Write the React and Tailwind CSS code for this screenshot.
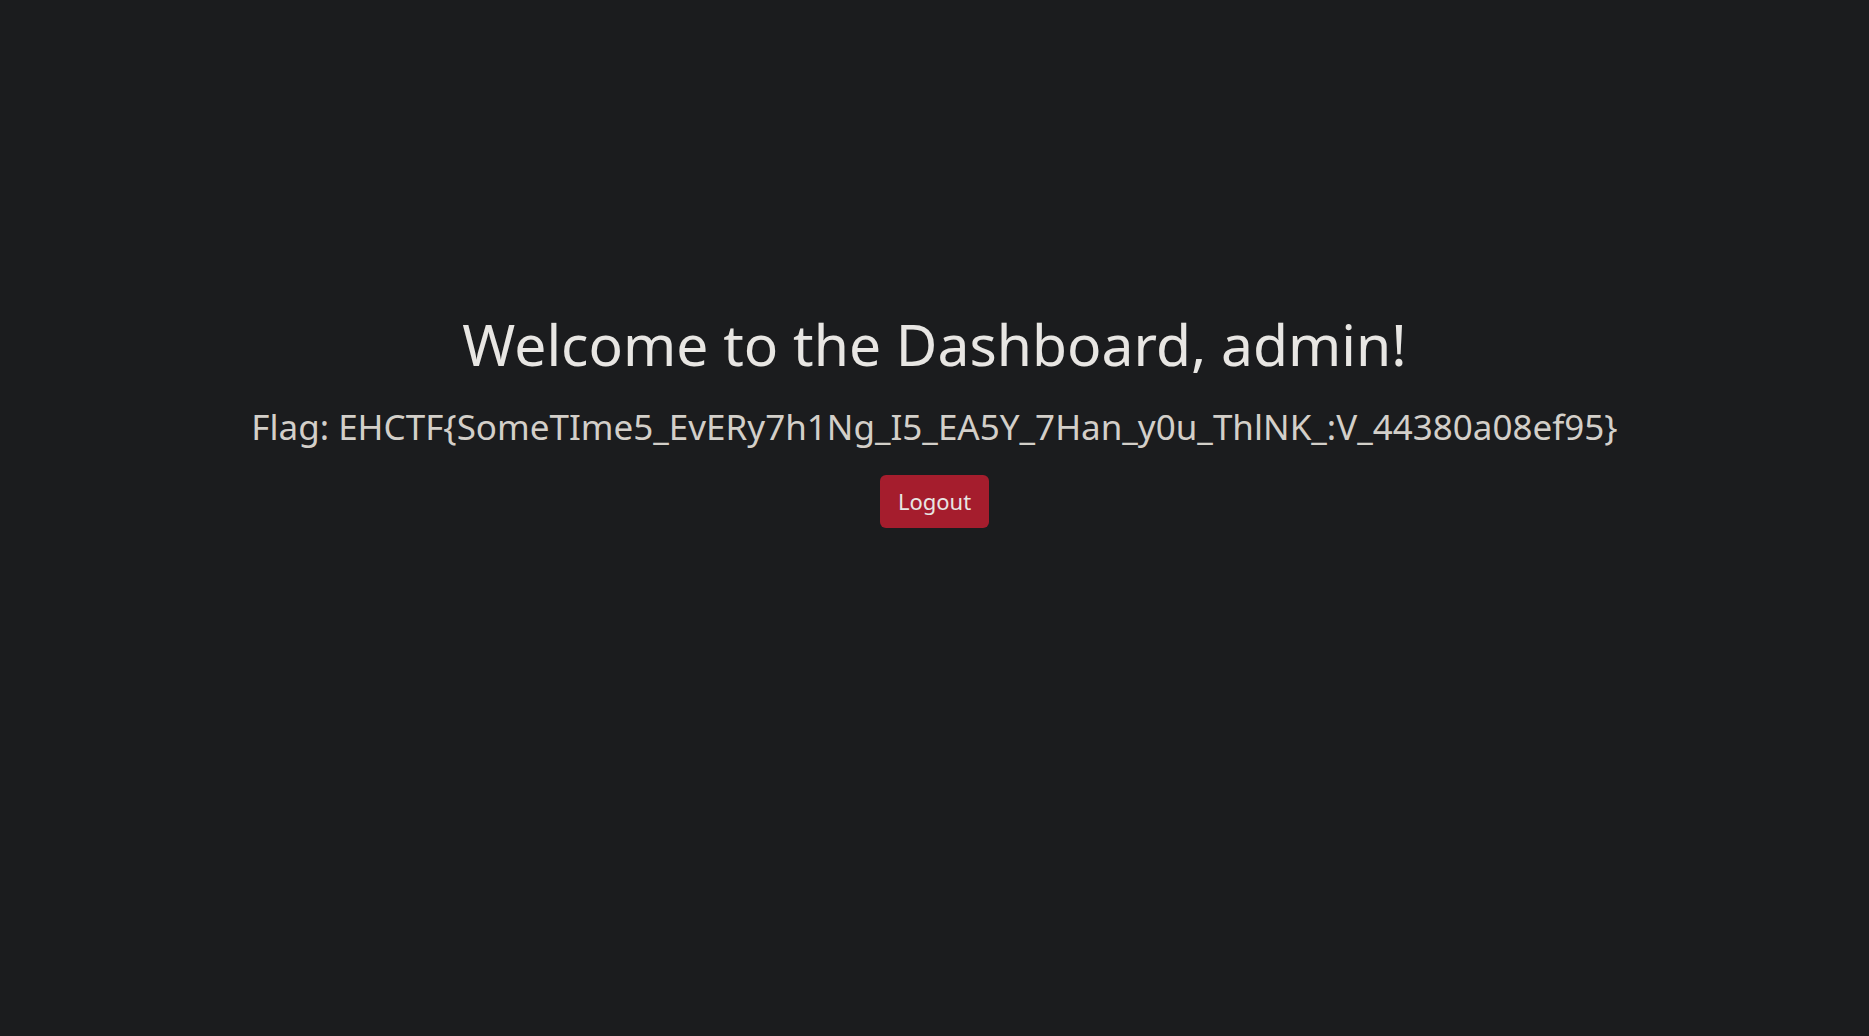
export default function App() {
  return (
    <div className="min-h-screen w-full bg-[#1b1c1e] text-[#e8e6e3] flex flex-col items-center pt-[310px]" style={{ fontFamily: '"Noto Sans", sans-serif' }}>
      <h1 className="text-[57px] font-normal leading-[1.2] m-0">Welcome to the Dashboard, admin!</h1>
      <p className="text-[35px] leading-[1.5] mt-[23px] text-[#d3cfc9]">Flag: EHCTF{'{'}SomeTIme5_EvERy7h1Ng_I5_EA5Y_7Han_y0u_ThlNK_:V_44380a08ef95{'}'}</p>
      <button className="mt-[21px] bg-[#a51d2d] text-[#e8e6e3] text-[22px] px-[18px] py-[10px] rounded-[6px]">Logout</button>
    </div>
  );
}
